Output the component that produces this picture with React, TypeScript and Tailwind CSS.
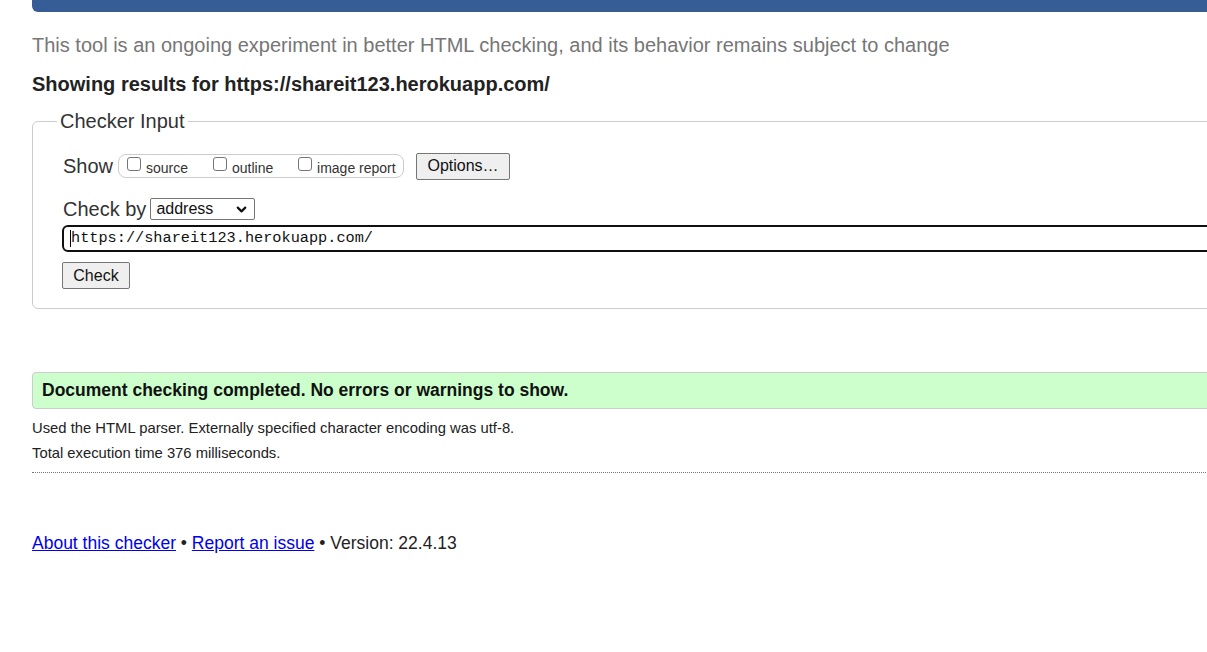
import { ChevronDown } from "lucide-react";

function Box({ label }: { label: string }) {
  return (
    <label className="flex items-center gap-[5px]">
      <span className="w-[14px] h-[14px] border border-[#767676] rounded-[3px] bg-white mt-[-4px]" />
      <span className="text-[14px] text-[#333] leading-none mt-[4px]">{label}</span>
    </label>
  );
}

export default function App() {
  return (
    <div className="w-full h-[652px] overflow-hidden bg-white font-['Liberation_Sans',Arial,sans-serif] text-[#222]">
      <div className="ml-[32px] w-[1300px]">
        <div className="h-[12px] bg-[#365d95] rounded-bl-[6px]" />

        <p className="mt-[21px] text-[20px] text-[#767676] leading-[24px]">
          This tool is an ongoing experiment in better HTML checking, and its behavior remains subject to change
        </p>
        <h2 className="mt-[15px] text-[20px] font-bold text-[#222] leading-[24px]">
          Showing results for https://shareit123.herokuapp.com/
        </h2>

        <fieldset className="mt-[13px] border border-[#cccccc] rounded-[6px] pl-[30px] pb-[19px] pt-0">
          <legend className="ml-[-6px] px-[3px] text-[20px] text-[#333] leading-[24px]">Checker Input</legend>

          <div className="mt-[19px] flex items-center h-[28px]">
            <span className="text-[20px] text-[#333]">Show</span>
            <div className="ml-[5px] flex items-center h-[24px] w-[286px] border border-[#ccc] rounded-[8px] pl-[8px]">
              <div className="w-[86px]"><Box label="source" /></div>
              <div className="w-[85px]"><Box label="outline" /></div>
              <Box label="image report" />
            </div>
            <button className="ml-[12px] h-[27px] w-[94px] border border-[#767676] rounded-[2px] bg-[#efefef] text-[16px] text-[#111]">
              Options…
            </button>
          </div>

          <div className="mt-[18px] flex items-center h-[22px]">
            <span className="text-[20px] text-[#333]">Check by</span>
            <div className="ml-[4px] flex items-center justify-between w-[105px] h-[22px] border border-[#767676] rounded-[2px] px-[5px]">
              <span className="text-[16px] text-[#111]">address</span>
              <ChevronDown size={15} strokeWidth={3.5} className="text-[#111]" />
            </div>
          </div>

          <div className="mt-[5px] ml-[-1px] h-[27px] border-2 border-[#101010] rounded-[6px] flex items-center pl-[6px]">
            <span className="w-px h-[17px] bg-black" />
            <span className="font-['Liberation_Mono','DejaVu_Sans_Mono',monospace] text-[15.25px] text-[#111]">
              https://shareit123.herokuapp.com/
            </span>
          </div>

          <button className="mt-[10px] ml-[-1px] h-[27px] w-[68px] border border-[#767676] rounded-[2px] bg-[#efefef] text-[16px] text-[#111]">
            Check
          </button>
        </fieldset>

        <div className="mt-[63px] h-[37px] bg-[#ccffcc] border border-[#cccccc] rounded-[4px] flex items-center pl-[9px]">
          <span className="text-[17.5px] font-bold text-[#111]">Document checking completed. No errors or warnings to show.</span>
        </div>

        <p className="mt-[10px] text-[14.8px] text-[#222] leading-[18px]">
          Used the HTML parser. Externally specified character encoding was utf-8.
        </p>
        <p className="mt-[7px] text-[14.8px] text-[#222] leading-[18px]">Total execution time 376 milliseconds.</p>
        <div className="mt-[10px] border-t border-dotted border-[#777]" />

        <p className="mt-[59px] text-[17.5px] text-[#222] leading-[22px]">
          <a className="text-[#0000ee] underline" href="#">About this checker</a>
          {" • "}
          <a className="text-[#0000ee] underline" href="#">Report an issue</a>
          {" • Version: 22.4.13"}
        </p>
      </div>
    </div>
  );
}
